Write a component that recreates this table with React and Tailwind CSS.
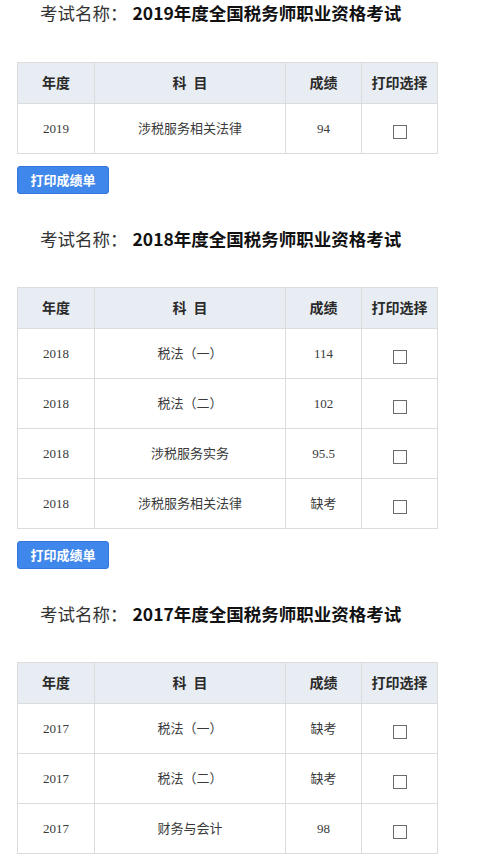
import React from "react";

const sections = [
  {
    year: "2019",
    rows: [["2019", "涉税服务相关法律", "94"]],
  },
  {
    year: "2018",
    rows: [
      ["2018", "税法（一）", "114"],
      ["2018", "税法（二）", "102"],
      ["2018", "涉税服务实务", "95.5"],
      ["2018", "涉税服务相关法律", "缺考"],
    ],
  },
  {
    year: "2017",
    rows: [
      ["2017", "税法（一）", "缺考"],
      ["2017", "税法（二）", "缺考"],
      ["2017", "财务与会计", "98"],
    ],
  },
];

const serif = { fontFamily: '"Liberation Serif", "Noto Sans CJK SC", serif' };

function Row({ cells, header }) {
  const base =
    "flex items-center justify-center border-r border-b border-[#dcdcdc]";
  const h = header
    ? "h-[41px] bg-[#e8edf3] text-[14px] text-[#2a2a2a] font-bold"
    : "h-[50px] text-[13px] text-[#3a3a3a]";
  return (
    <div className={"flex " + h} style={serif}>
      <div className={base + " w-[77px]"}>{cells[0]}</div>
      <div className={base + " w-[191px]"}>{cells[1]}</div>
      <div className={base + " w-[76px]"}>{cells[2]}</div>
      <div className={base + " w-[76px]"}>
        {header ? (
          cells[3]
        ) : (
          <span className="mt-[6px] block h-[14px] w-[14px] border-[1.5px] border-[#6a6a6a] bg-white" />
        )}
      </div>
    </div>
  );
}

function Section({ data, first, last }) {
  return (
    <div className={first ? "" : "mt-[32px]"}>
      <div
        className="ml-[40px] flex h-[26px] items-center text-[17.5px] leading-[26px]"
        style={{ fontFamily: '"Noto Sans CJK SC", "Noto Sans", sans-serif' }}
      >
        <span className="text-[#333]">考试名称：</span>
        <span className="ml-[5px] font-bold text-[#111]">
          {data.year}年度全国税务师职业资格考试
        </span>
      </div>
      <div
        className={
          (first ? "mt-[36px]" : "mt-[35px]") +
          " ml-[17px] w-[421px] border-l border-t border-[#dcdcdc]"
        }
      >
        <Row header cells={["年度", "科\u00a0\u00a0目", "成绩", "打印选择"]} />
        {data.rows.map((r, i) => (
          <Row key={i} cells={r} />
        ))}
      </div>
      {!last && (
        <button
          className="ml-[17px] mt-[12px] flex h-[28px] w-[92px] items-center justify-center rounded-[3px] border border-[#3377dd] bg-[#3f87ea] text-[13px] font-bold text-white"
          style={{ fontFamily: '"Noto Sans CJK SC", sans-serif' }}
        >
          打印成绩单
        </button>
      )}
    </div>
  );
}

export default function App() {
  return (
    <div className="h-[864px] w-[500px] overflow-hidden bg-white">
      {sections.map((s, i) => (
        <Section
          key={s.year}
          data={s}
          first={i === 0}
          last={i === sections.length - 1}
        />
      ))}
    </div>
  );
}
